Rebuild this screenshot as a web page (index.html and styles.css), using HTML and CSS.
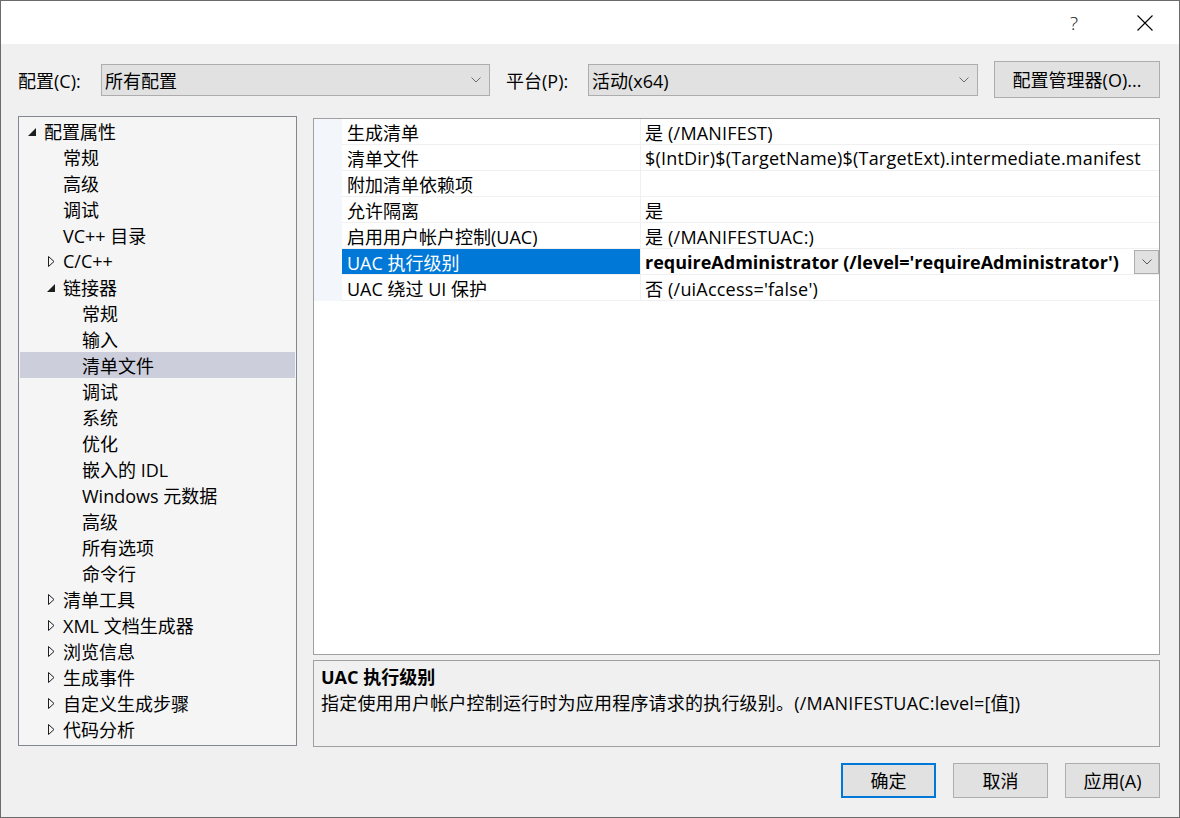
FILE: index.html
```html
<!DOCTYPE html>
<html lang="zh-CN">
<head>
  <meta charset="UTF-8">
  <title>属性页</title>
  <link rel="stylesheet" href="styles.css">
</head>
<body>
  <div class="dialog">
    <div class="titlebar">
      <span class="help">?</span>
      <svg class="close" width="16" height="16" viewBox="0 0 16 16">
        <path d="M0.5 0.5 L15.5 15.5 M15.5 0.5 L0.5 15.5" stroke="#000" stroke-width="1.1" fill="none"/>
      </svg>
    </div>

    <div class="toolbar">
      <span class="label label-config">配置(C):</span>
      <div class="combo combo-config">
        <span>所有配置</span>
        <svg class="chevron" width="10" height="6" viewBox="0 0 10 6"><path d="M0.5 0.5 L5 5 L9.5 0.5" stroke="#6d6d6d" fill="none"/></svg>
      </div>
      <span class="label label-platform">平台(P):</span>
      <div class="combo combo-platform">
        <span>活动(x64)</span>
        <svg class="chevron" width="10" height="6" viewBox="0 0 10 6"><path d="M0.5 0.5 L5 5 L9.5 0.5" stroke="#6d6d6d" fill="none"/></svg>
      </div>
      <button class="btn btn-manager">配置管理器(O)...</button>
    </div>

    <div class="main">
      <div class="tree">
        <div class="node lvl0"><span class="twisty open"></span>配置属性</div>
        <div class="node lvl1"><span class="twisty"></span>常规</div>
        <div class="node lvl1"><span class="twisty"></span>高级</div>
        <div class="node lvl1"><span class="twisty"></span>调试</div>
        <div class="node lvl1"><span class="twisty"></span>VC++ 目录</div>
        <div class="node lvl1"><span class="twisty closed"></span>C/C++</div>
        <div class="node lvl1"><span class="twisty open"></span>链接器</div>
        <div class="node lvl2"><span class="twisty"></span>常规</div>
        <div class="node lvl2"><span class="twisty"></span>输入</div>
        <div class="node lvl2 selected"><span class="twisty"></span>清单文件</div>
        <div class="node lvl2"><span class="twisty"></span>调试</div>
        <div class="node lvl2"><span class="twisty"></span>系统</div>
        <div class="node lvl2"><span class="twisty"></span>优化</div>
        <div class="node lvl2"><span class="twisty"></span>嵌入的 IDL</div>
        <div class="node lvl2"><span class="twisty"></span>Windows 元数据</div>
        <div class="node lvl2"><span class="twisty"></span>高级</div>
        <div class="node lvl2"><span class="twisty"></span>所有选项</div>
        <div class="node lvl2"><span class="twisty"></span>命令行</div>
        <div class="node lvl1"><span class="twisty closed"></span>清单工具</div>
        <div class="node lvl1"><span class="twisty closed"></span>XML 文档生成器</div>
        <div class="node lvl1"><span class="twisty closed"></span>浏览信息</div>
        <div class="node lvl1"><span class="twisty closed"></span>生成事件</div>
        <div class="node lvl1"><span class="twisty closed"></span>自定义生成步骤</div>
        <div class="node lvl1"><span class="twisty closed"></span>代码分析</div>
      </div>

      <div class="right">
        <div class="grid">
          <div class="prop"><span class="gutter"></span><span class="name">生成清单</span><span class="value">是 (/MANIFEST)</span></div>
          <div class="prop"><span class="gutter"></span><span class="name">清单文件</span><span class="value">$(IntDir)$(TargetName)$(TargetExt).intermediate.manifest</span></div>
          <div class="prop"><span class="gutter"></span><span class="name">附加清单依赖项</span><span class="value"></span></div>
          <div class="prop"><span class="gutter"></span><span class="name">允许隔离</span><span class="value">是</span></div>
          <div class="prop"><span class="gutter"></span><span class="name">启用用户帐户控制(UAC)</span><span class="value">是 (/MANIFESTUAC:)</span></div>
          <div class="prop active">
            <span class="gutter"></span><span class="name">UAC 执行级别</span>
            <span class="value"><b>requireAdministrator (/level='requireAdministrator')</b>
              <span class="drop"><svg width="10" height="6" viewBox="0 0 10 6"><path d="M0.5 0.5 L5 5 L9.5 0.5" stroke="#555" fill="none"/></svg></span>
            </span>
          </div>
          <div class="prop"><span class="gutter"></span><span class="name">UAC 绕过 UI 保护</span><span class="value">否 (/uiAccess='false')</span></div>
        </div>
        <div class="desc">
          <div class="desc-title">UAC 执行级别</div>
          <div class="desc-text">指定使用用户帐户控制运行时为应用程序请求的执行级别。(/MANIFESTUAC:level=[值])</div>
        </div>
      </div>
    </div>

    <div class="footer">
      <button class="btn btn-default">确定</button>
      <button class="btn">取消</button>
      <button class="btn">应用(A)</button>
    </div>
  </div>
</body>
</html>
```

FILE: styles.css
```css
* {
  margin: 0;
  padding: 0;
  box-sizing: border-box;
}

body {
  font-family: 'Open Sans', 'Noto Sans CJK SC', sans-serif;
  font-size: 18px;
  color: #000;
  background: #f0f0f0;
}

.dialog {
  width: 1180px;
  height: 818px;
  border: 1px solid #6b6b6b;
  background: #f0f0f0;
  display: flex;
  flex-direction: column;
}

.titlebar {
  height: 43px;
  background: #fff;
  display: flex;
  align-items: center;
  justify-content: flex-end;
  padding-right: 26px;
}

.help {
  font-size: 19px;
  font-weight: 300;
  margin-right: 59px;
  color: #111;
}

.close {
  display: block;
}

.toolbar {
  display: flex;
  align-items: center;
  padding: 17px 19px 0 17px;
  margin-bottom: 18px;
}

.label {
  white-space: nowrap;
}

.label-config {
  width: 83px;
}

.label-platform {
  width: 82px;
  margin-left: 16px;
}

.combo {
  height: 32px;
  background: #e1e1e1;
  border: 1px solid #adadad;
  display: flex;
  align-items: center;
  justify-content: space-between;
  padding: 0 8px 0 3px;
}

.combo-config {
  width: 389px;
}

.combo-platform {
  width: 390px;
}

.btn {
  font-family: inherit;
  font-size: 18px;
  background: #e1e1e1;
  border: 1px solid #adadad;
  color: #000;
  height: 35px;
  width: 95px;
  padding-bottom: 1px;
}

.btn-manager {
  width: 166px;
  height: 37px;
  margin-left: 16px;
}

.btn-default {
  border: 2px solid #0078d7;
}

.main {
  display: flex;
  padding-left: 17px;
  gap: 16px;
}

.tree {
  width: 279px;
  height: 630px;
  border: 1px solid #828790;
  background: #f5f5f5;
  padding: 1px;
}

.node {
  height: 26px;
  display: flex;
  align-items: center;
  white-space: nowrap;
}

.node.selected {
  background: #cccedb;
}

.lvl0 { padding-left: 5px; }
.lvl1 { padding-left: 24px; }
.lvl2 { padding-left: 43px; }

.twisty {
  width: 19px;
  height: 26px;
  flex: none;
  position: relative;
}

.twisty.open::after {
  content: "";
  position: absolute;
  left: 3px;
  top: 10px;
  border-style: solid;
  border-width: 0 0 8px 8px;
  border-color: transparent transparent #1e1e1e transparent;
}

.twisty.closed::after {
  content: "";
  position: absolute;
  left: 4px;
  top: 8px;
  width: 7px;
  height: 11px;
  background: no-repeat center / 7px 11px url("data:image/svg+xml;utf8,<svg xmlns='http://www.w3.org/2000/svg' width='7' height='11' viewBox='0 0 7 11'><path d='M0.5 0.5 L6 5.5 L0.5 10.5 Z' fill='none' stroke='%231e1e1e'/></svg>");
}

.right {
  width: 847px;
  margin-top: 2px;
  display: flex;
  flex-direction: column;
  gap: 5px;
}

.grid {
  height: 537px;
  border: 1px solid #a0a0a0;
  background: #fff;
}

.prop {
  height: 26px;
  display: flex;
}

.gutter {
  width: 28px;
  flex: none;
  background: #f3f6fb;
}

.name {
  width: 299px;
  flex: none;
  padding-left: 5px;
  border-right: 1px solid #f0f0f0;
  border-bottom: 1px solid #f0f0f0;
  display: flex;
  align-items: center;
  white-space: nowrap;
}

.value {
  flex: 1;
  padding-left: 4px;
  border-bottom: 1px solid #f0f0f0;
  display: flex;
  align-items: center;
  justify-content: space-between;
  white-space: nowrap;
  letter-spacing: 0.2px;
}

.value b {
  letter-spacing: 0;
}

.prop.active .name {
  background: #0078d7;
  color: #fff;
}

.drop {
  width: 25px;
  height: 24px;
  margin-top: 1px;
  align-self: flex-start;
  background: #e1e1e1;
  border: 1px solid #adadad;
  display: flex;
  align-items: center;
  justify-content: center;
}

.drop svg {
  display: block;
}

.desc {
  height: 87px;
  border: 1px solid #a0a0a0;
  background: #f0f0f0;
  padding: 3px 7px;
}

.desc-title {
  font-weight: bold;
  height: 26px;
  line-height: 26px;
}

.desc-text {
  height: 26px;
  line-height: 26px;
  white-space: nowrap;
  letter-spacing: 0.2px;
}

.footer {
  display: flex;
  justify-content: flex-end;
  gap: 17px;
  padding: 16px 19px 0 0;
}
```
